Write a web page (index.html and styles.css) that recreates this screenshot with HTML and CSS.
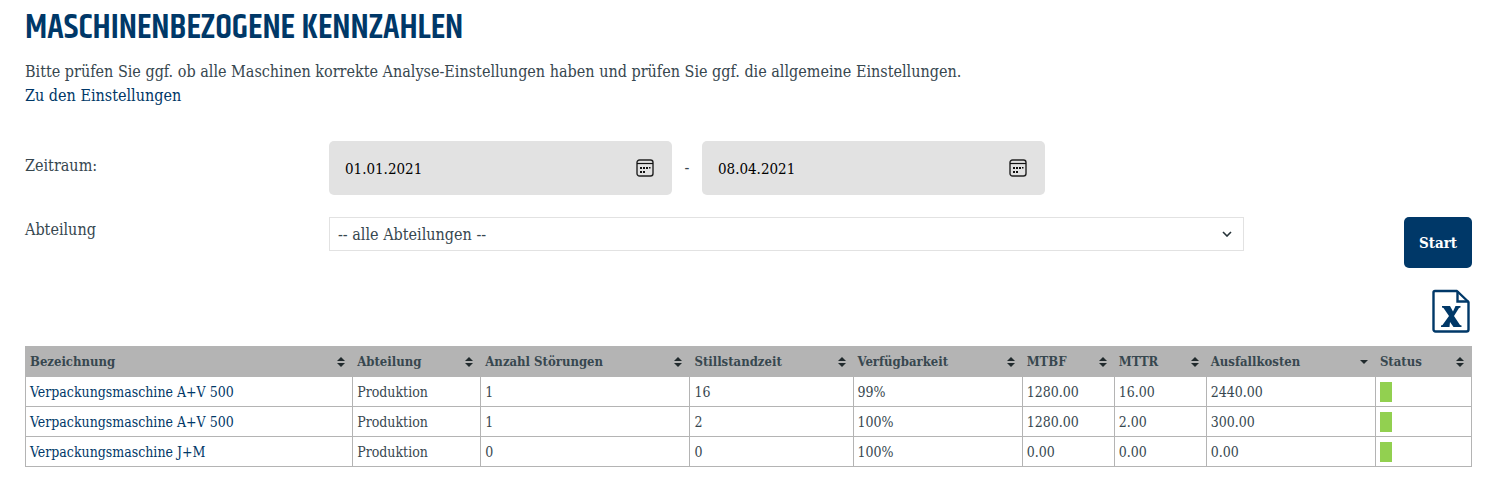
FILE: index.html
```html
<!DOCTYPE html>
<html lang="de">
<head>
<meta charset="utf-8">
<meta name="viewport" content="width=device-width, initial-scale=1">
<title>Maschinenbezogene Kennzahlen</title>
<link rel="stylesheet" href="styles.css">
</head>
<body>
<svg class="sprite" aria-hidden="true">
  <symbol id="calendar" viewBox="0 0 18 18">
    <rect x="1" y="1" width="16" height="16" rx="2.5" fill="none" stroke="#222" stroke-width="1.4"/>
    <path d="M1 4.500h16" stroke="#111" stroke-width="1.2"/>
    <path d="M4 8h2v2H4zM7 8h2v2H7zM10 8h2v2h-2zM13 8h1.500v1.500H13zM4 12h2v2H4zM7 12h2v2H7z" fill="#111"/>
  </symbol>
  <symbol id="sort" viewBox="0 0 8 10">
    <path d="M4 0 8 4H0zM0 6h8L4 10z" fill="#212a2d"/>
  </symbol>
  <symbol id="sort-desc" viewBox="0 0 8 10">
    <path d="M0 3h8L4 7z" fill="#212a2d"/>
  </symbol>
</svg>
<main class="page">
  <h1 class="title">MASCHINENBEZOGENE KENNZAHLEN</h1>
  <p class="intro">Bitte prüfen Sie ggf. ob alle Maschinen korrekte Analyse-Einstellungen haben und prüfen Sie ggf. die allgemeine Einstellungen.<br><a class="link" href="#">Zu den Einstellungen</a></p>

  <form class="filter">
    <label class="label label-dates" for="from">Zeitraum:</label>
    <div class="dates">
      <div class="date">
        <input class="date-input" id="from" type="text" value="01.01.2021">
        <button class="date-button" type="button" aria-label="Startdatum wählen"><svg class="calendar"><use href="#calendar"/></svg></button>
      </div>
      <span class="dash">-</span>
      <div class="date">
        <input class="date-input" type="text" value="08.04.2021" aria-label="Enddatum">
        <button class="date-button" type="button" aria-label="Enddatum wählen"><svg class="calendar"><use href="#calendar"/></svg></button>
      </div>
    </div>
    <span></span>
    <label class="label" for="department">Abteilung</label>
    <div class="select-wrap">
      <select class="select" id="department"><option>-- alle Abteilungen --</option></select>
      <svg class="chevron" viewBox="0 0 10 6"><path d="M1 1l4 4 4-4" fill="none" stroke="#263238" stroke-width="1.600"/></svg>
    </div>
    <button class="start" type="submit">Start</button>
  </form>

  <div class="export">
    <a class="excel-link" href="#" aria-label="Excel-Export">
      <svg class="excel" viewBox="0 0 38 44">
        <path d="M3 2h22l11.500 11v27.500a2 2 0 0 1-2 2H3.500a2 2 0 0 1-2-2V3.500a1.500 1.500 0 0 1 1.500-1.500z" fill="none" stroke="#003868" stroke-width="2.400" stroke-linejoin="round"/>
        <path d="M25.500 2v10.500h11" fill="none" stroke="#003868" stroke-width="2.400"/>
        <path d="M10 17h8l3 5.500 2.500-5.500h5v1.500l-1.500.5-5 8 6 9 1.500.5V38h-8l-3.500-5-.5 5H9v-1.500l1.500-.5 6.500-9-5.500-8-1.500-.5z" fill="#003868"/>
      </svg>
    </a>
  </div>

  <table class="table">
    <colgroup><col class="c-name"><col class="c-dept"><col class="c-faults"><col class="c-idle"><col class="c-avail"><col class="c-mtbf"><col class="c-mtbf"><col class="c-cost"><col class="c-status"></colgroup>
    <thead>
      <tr>
        <th><button class="sort" type="button">Bezeichnung<svg class="arrows"><use href="#sort"/></svg></button></th>
        <th><button class="sort" type="button">Abteilung<svg class="arrows"><use href="#sort"/></svg></button></th>
        <th><button class="sort" type="button">Anzahl Störungen<svg class="arrows"><use href="#sort"/></svg></button></th>
        <th><button class="sort" type="button">Stillstandzeit<svg class="arrows"><use href="#sort"/></svg></button></th>
        <th><button class="sort" type="button">Verfügbarkeit<svg class="arrows"><use href="#sort"/></svg></button></th>
        <th><button class="sort" type="button">MTBF<svg class="arrows"><use href="#sort"/></svg></button></th>
        <th><button class="sort" type="button">MTTR<svg class="arrows"><use href="#sort"/></svg></button></th>
        <th aria-sort="descending"><button class="sort" type="button">Ausfallkosten<svg class="arrows"><use href="#sort-desc"/></svg></button></th>
        <th><button class="sort" type="button">Status<svg class="arrows"><use href="#sort"/></svg></button></th>
      </tr>
    </thead>
    <tbody>
      <tr><td><a class="link" href="#">Verpackungsmaschine A+V 500</a></td><td>Produktion</td><td>1</td><td>16</td><td>99%</td><td>1280.00</td><td>16.00</td><td>2440.00</td><td><div class="status"></div></td></tr>
      <tr><td><a class="link" href="#">Verpackungsmaschine A+V 500</a></td><td>Produktion</td><td>1</td><td>2</td><td>100%</td><td>1280.00</td><td>2.00</td><td>300.00</td><td><div class="status"></div></td></tr>
      <tr><td><a class="link" href="#">Verpackungsmaschine J+M</a></td><td>Produktion</td><td>0</td><td>0</td><td>100%</td><td>0.00</td><td>0.00</td><td>0.00</td><td><div class="status"></div></td></tr>
    </tbody>
  </table>
</main>
</body>
</html>
```

FILE: styles.css
```css
* { box-sizing: border-box; }

body {
  margin: 0;
  background: #fff;
  color: #37474f;
  font: 16px/24px "Roboto Slab", "DejaVu Serif Condensed", "DejaVu Serif", serif;
}

input, select, button { font: inherit; color: inherit; }

.sprite { display: none; }

.page { padding: 10px 29px 24px 25px; }

.title {
  margin: 0 0 14px;
  color: #003868;
  font: 600 35px/36px "Khand", "Liberation Sans Narrow", "DejaVu Sans Condensed", sans-serif;
}

.intro { margin: 0 0 33px; }

.link { color: #003868; text-decoration: none; }

.filter {
  display: grid;
  grid-template-columns: 304fr 915fr 228fr;
  row-gap: 22px;
  align-items: start;
}

.label { padding-top: 1px; }

.label-dates { padding-top: 13px; }

.dates { display: flex; align-items: center; }

.date {
  display: flex;
  align-items: center;
  width: 343px;
  height: 54px;
  padding: 0 18px 0 16px;
  border-radius: 5px;
  background: #e2e2e2;
  color: #000;
}

.date-input {
  flex: 1;
  min-width: 0;
  padding: 2px 0 0;
  border: 0;
  background: none;
  font-size: 15px;
}

.date-button {
  display: flex;
  padding: 0;
  border: 0;
  background: none;
}

.calendar { width: 18px; height: 18px; }

.dash { width: 30px; text-align: center; }

.select-wrap { position: relative; }

.select {
  appearance: none;
  display: block;
  width: 100%;
  height: 34px;
  padding: 1px 32px 0 8px;
  border: 1px solid #e2e2e2;
  border-radius: 0;
  background: #fff;
}

.chevron {
  position: absolute;
  top: 14px;
  right: 12px;
  width: 10px;
  height: 6px;
  pointer-events: none;
}

.start {
  justify-self: end;
  height: 51px;
  padding: 0 15px;
  border: 0;
  border-radius: 5px;
  background: #003868;
  color: #fff;
  font-size: 15px;
  font-weight: bold;
}

.export { display: flex; justify-content: flex-end; padding: 21px 2px 13px; }

.excel-link { display: flex; }

.excel { width: 38px; height: 44px; }

.table {
  width: 100%;
  table-layout: fixed;
  border-collapse: collapse;
  font-size: 14px;
  line-height: 20px;
}

.table th, .table td {
  height: 30px;
  padding: 4px;
  border: 1px solid #b4b4b4;
  text-align: left;
  white-space: nowrap;
}

.table th { background: #b4b4b4; font-size: 13px; }

.sort {
  display: flex;
  align-items: center;
  justify-content: space-between;
  width: 100%;
  padding: 0 3px 0 0;
  border: 0;
  background: none;
  font-weight: bold;
}

.arrows { flex: none; width: 8px; height: 10px; }

.c-name { width: 327px; }
.c-dept { width: 128px; }
.c-faults { width: 209px; }
.c-idle { width: 163px; }
.c-avail { width: 169px; }
.c-mtbf { width: 92px; }
.c-cost { width: 169px; }
.c-status { width: 96px; }

.status { width: 12px; height: 20px; background: #92d050; }
```
